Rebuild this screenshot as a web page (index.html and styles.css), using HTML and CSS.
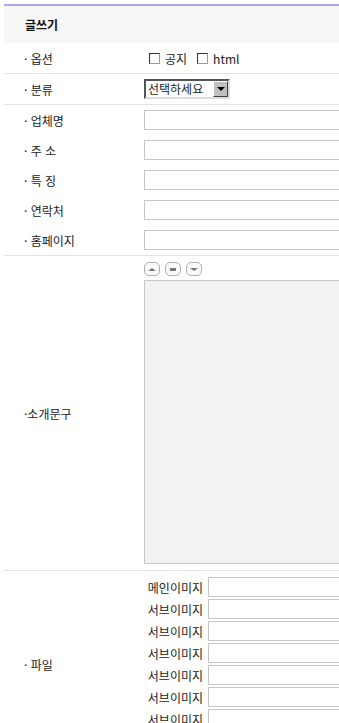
FILE: index.html
```html
<!DOCTYPE html>
<html lang="ko">
<head>
  <meta charset="UTF-8" />
  <title>글쓰기</title>
  <link rel="stylesheet" href="styles.css">
</head>
<body>
  <div class="board">
    <div class="boardTitle">글쓰기</div>

    <div class="row line">
      <div class="label">· 옵션</div>
      <div class="field">
        <label class="check"><span class="box"></span>공지</label>
        <label class="check"><span class="box"></span>html</label>
      </div>
    </div>

    <div class="row line">
      <div class="label">· 분류</div>
      <div class="field">
        <div class="select">
          <span class="selectText">선택하세요</span>
          <span class="selectBtn"><span class="arrowDown"></span></span>
        </div>
      </div>
    </div>

    <div class="row">
      <div class="label">· 업체명</div>
      <div class="field"><input class="text" type="text"></div>
    </div>
    <div class="row">
      <div class="label">· 주 소</div>
      <div class="field"><input class="text" type="text"></div>
    </div>
    <div class="row">
      <div class="label">· 특 징</div>
      <div class="field"><input class="text" type="text"></div>
    </div>
    <div class="row">
      <div class="label">· 연락처</div>
      <div class="field"><input class="text" type="text"></div>
    </div>
    <div class="row line">
      <div class="label">· 홈페이지</div>
      <div class="field"><input class="text" type="text"></div>
    </div>

    <div class="row line tall">
      <div class="label">·소개문구</div>
      <div class="field column">
        <div class="sizeBtns">
          <span class="sizeBtn"><span class="triUp"></span></span>
          <span class="sizeBtn"><span class="dash"></span></span>
          <span class="sizeBtn"><span class="triDown"></span></span>
        </div>
        <textarea class="content"></textarea>
      </div>
    </div>

    <div class="row tall">
      <div class="label">· 파일</div>
      <div class="field column files">
        <div class="fileRow"><span class="fileName">메인이미지</span><input class="text" type="text"></div>
        <div class="fileRow"><span class="fileName">서브이미지</span><input class="text" type="text"></div>
        <div class="fileRow"><span class="fileName">서브이미지</span><input class="text" type="text"></div>
        <div class="fileRow"><span class="fileName">서브이미지</span><input class="text" type="text"></div>
        <div class="fileRow"><span class="fileName">서브이미지</span><input class="text" type="text"></div>
        <div class="fileRow"><span class="fileName">서브이미지</span><input class="text" type="text"></div>
        <div class="fileRow"><span class="fileName">서브이미지</span><input class="text" type="text"></div>
        <div class="fileRow"><span class="fileName">서브이미지</span><input class="text" type="text"></div>
      </div>
    </div>
  </div>
</body>
</html>
```

FILE: styles.css
```css
html, body {
  overflow: hidden;
}

body {
  margin: 0;
  padding: 4px 0 0 4px;
  background: #fff;
  font-family: "Noto Sans CJK KR", "DejaVu Sans", sans-serif;
  font-size: 12px;
  color: #222;
}

.board {
  width: 600px;
  border-top: 2px solid #aaa6ee;
}

.boardTitle {
  height: 37px;
  line-height: 37px;
  padding-left: 21px;
  background: #f7f7f7;
  font-weight: bold;
  color: #111;
}

.row {
  display: grid;
  grid-template-columns: 140px 1fr;
  align-items: center;
  min-height: 30px;
}

.row.line {
  border-bottom: 1px solid #e3e3e3;
}

.row.tall {
  padding: 6px 0;
}

.label {
  padding-left: 20px;
  white-space: nowrap;
}

.field {
  display: flex;
  align-items: center;
}

.field.column {
  flex-direction: column;
  align-items: flex-start;
}

.text {
  box-sizing: border-box;
  width: 420px;
  height: 20px;
  margin: 0;
  border: 1px solid #c6c6c6;
  background: #fff;
}

.check {
  display: flex;
  align-items: center;
  margin-left: 5px;
  margin-right: 5px;
}

.check .box {
  box-sizing: border-box;
  width: 11px;
  height: 11px;
  margin-right: 5px;
  border: 1px solid #333;
  border-right-color: #999;
  border-bottom-color: #999;
  background: #fff;
}

.select {
  box-sizing: border-box;
  display: flex;
  align-items: center;
  width: 86px;
  height: 20px;
  border: 2px solid;
  border-color: #555 #ddd #ddd #555;
  background: #fff;
}

.selectText {
  flex: 1;
  padding-left: 2px;
  font-size: 12px;
  line-height: 16px;
}

.selectBtn {
  box-sizing: border-box;
  display: flex;
  align-items: center;
  justify-content: center;
  width: 15px;
  height: 16px;
  background: #c0c0c0;
  border: 1px solid;
  border-color: #fff #404040 #404040 #fff;
}

.arrowDown {
  border-left: 4px solid transparent;
  border-right: 4px solid transparent;
  border-top: 4px solid #000;
}

.sizeBtns {
  display: flex;
  gap: 5px;
  margin-bottom: 4px;
}

.sizeBtn {
  box-sizing: border-box;
  display: flex;
  align-items: center;
  justify-content: center;
  width: 16px;
  height: 14px;
  border: 1px solid #b0b0b0;
  border-radius: 5px;
  background: #fafafa;
}

.triUp {
  border-left: 4px solid transparent;
  border-right: 4px solid transparent;
  border-bottom: 3px solid #777;
}

.triDown {
  border-left: 4px solid transparent;
  border-right: 4px solid transparent;
  border-top: 3px solid #777;
}

.dash {
  width: 6px;
  height: 3px;
  background: #777;
}

.content {
  box-sizing: border-box;
  width: 420px;
  height: 284px;
  margin: 0;
  border: 1px solid #c6c6c6;
  background: #f2f2f2;
  resize: none;
}

.files {
  gap: 2px;
}

.fileRow {
  display: flex;
  align-items: center;
  gap: 5px;
}

.fileName {
  width: 59px;
  text-align: right;
  white-space: nowrap;
}
```
